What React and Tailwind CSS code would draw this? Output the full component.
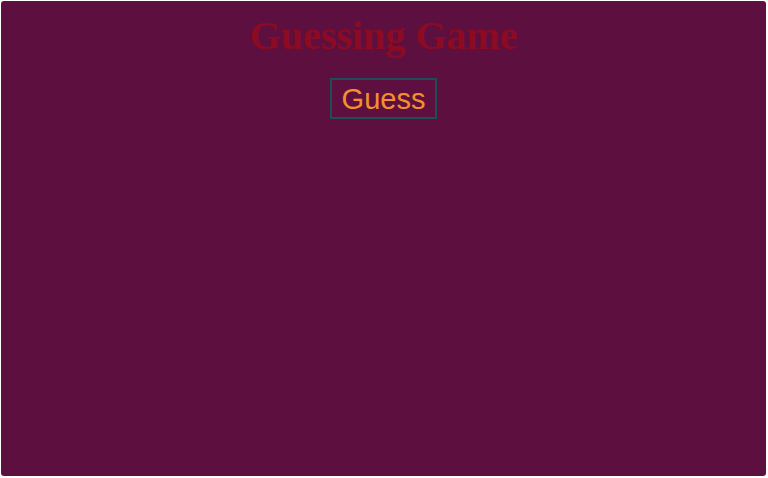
export default function App() {
  return (
    <div className="w-[768px] h-[478px] bg-white pt-px pl-px pr-[2px] pb-[2px]">
      <div className="w-full h-full bg-[#5d1040] rounded-[3px] flex flex-col items-center">
        <h1
          className="text-[40px] leading-[46px] font-bold text-[#8c0a22] mt-[12px]"
          style={{ fontFamily: '"Liberation Serif", "Times New Roman", serif' }}
        >
          Guessing Game
        </h1>
        <button
          className="mt-[19px] h-[41px] border-2 border-[#1d4d58] px-[10px] pt-[2px] text-[29px] leading-none text-[#f4902a] flex items-center"
          style={{ fontFamily: '"Liberation Sans", Arial, sans-serif' }}
        >
          Guess
        </button>
      </div>
    </div>
  );
}
